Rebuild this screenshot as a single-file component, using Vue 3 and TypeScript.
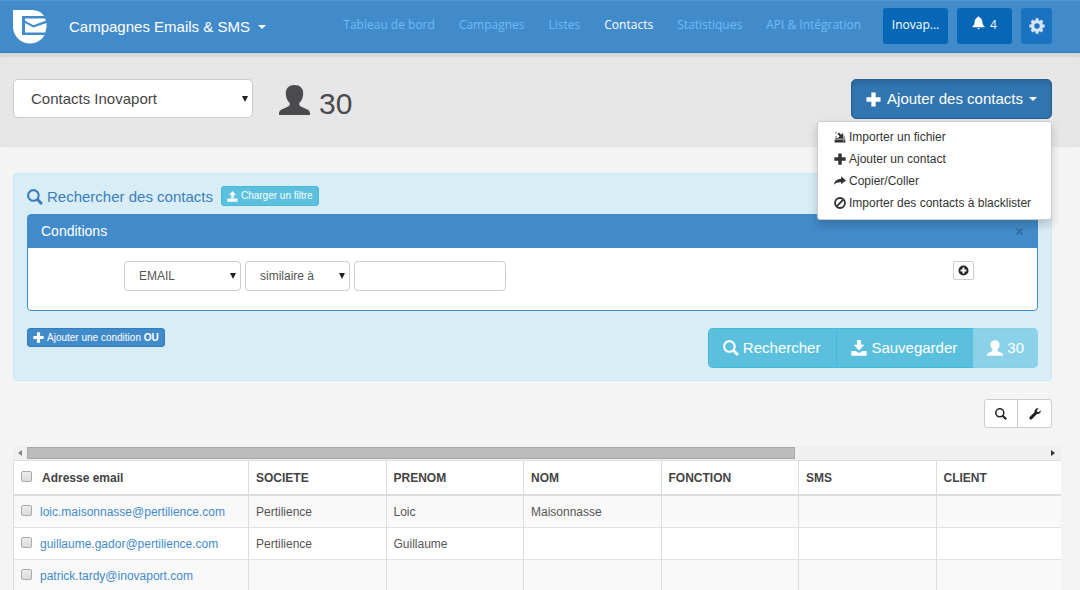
<script setup lang="ts">
import { ref } from 'vue'

interface NavLink {
  label: string
  active?: boolean
}

interface Contact {
  email: string
  societe?: string
  prenom?: string
  nom?: string
}

const links: NavLink[] = [
  { label: 'Tableau de bord' },
  { label: 'Campagnes' },
  { label: 'Listes' },
  { label: 'Contacts', active: true },
  { label: 'Statistiques' },
  { label: 'API & Intégration' },
]

const menu = [
  { icon: 'import', label: 'Importer un fichier' },
  { icon: 'plus', label: 'Ajouter un contact' },
  { icon: 'share', label: 'Copier/Coller' },
  { icon: 'ban', label: 'Importer des contacts à blacklister' },
]

const columns = ['SOCIETE', 'PRENOM', 'NOM', 'FONCTION', 'SMS', 'CLIENT']

const contacts: Contact[] = [
  { email: 'loic.maisonnasse@pertilience.com', societe: 'Pertilience', prenom: 'Loic', nom: 'Maisonnasse' },
  { email: 'guillaume.gador@pertilience.com', societe: 'Pertilience', prenom: 'Guillaume' },
  { email: 'patrick.tardy@inovaport.com' },
]

const total = ref(30)
const search = ref('')
</script>

<template>
  <svg class="sprite" aria-hidden="true">
    <symbol id="i-search" viewBox="0 0 16 16"><circle cx="6.4" cy="6.4" r="5.3" fill="none" stroke="currentColor" stroke-width="2.1" /><path d="M10.2 10.2 15 15" fill="none" stroke="currentColor" stroke-width="2.9" /></symbol>
    <symbol id="i-user" viewBox="0 0 32 32"><path d="M16 .5c5.600 0 9 3.300 9 8.500 0 4-1.500 8-4.100 10.200v1.300c0 1.500 1 2 2.800 2.800l5 2.200C31 26.500 32 28 32 30v1.500H0V30c0-2 1-3.500 3.300-4.500l5-2.200c1.800-.8 2.800-1.300 2.800-2.800v-1.300C8.500 17 7 13 7 9 7 3.800 10.400.5 16 .5z" fill="currentColor" /></symbol>
    <symbol id="i-plus" viewBox="0 0 16 16"><path d="M5.700.5h4.600v5.200h5.200v4.600h-5.200v5.200H5.700v-5.200H.5V5.700h5.200z" fill="currentColor" /></symbol>
    <symbol id="i-upload" viewBox="0 0 16 16"><path d="M8 0l5 5.800H9.900V10H6.100V5.800H3zM.5 11h15v4.500H.5zM12 12.600v1.200h1.800v-1.200z" fill="currentColor" fill-rule="evenodd" /></symbol>
    <symbol id="i-download" viewBox="0 0 16 16"><path d="M6 0h4v4.800h3.300L8 10.400 2.700 4.800H6zM.3 11h4.200L8 13l3.500-2h4.200v4.700H.3z" fill="currentColor" /></symbol>
    <symbol id="i-import" viewBox="0 0 16 16"><path d="M.8 11.200h14.400v4.100H.8zM12 12.800v1h1.600v-1z" fill="currentColor" fill-rule="evenodd" /><path d="M12.200 2.200v7H5.300l2.300-2.200-3-3 2-2 3 3z" fill="currentColor" /><path d="M3.200 6.500 2.200 10h11.600l-.6-4M1.500 3.200l2.300-1.800" fill="none" stroke="currentColor" stroke-width="1" /></symbol>
    <symbol id="i-share" viewBox="0 0 16 16"><path d="M9.500 1.800 16 7.200l-6.500 5.200V9.600C5.400 9.400 2.600 10.200 0 13c.4-5 4.200-7.800 9.500-8z" fill="currentColor" /></symbol>
    <symbol id="i-ban" viewBox="0 0 16 16"><circle cx="8" cy="8" r="6.600" fill="none" stroke="currentColor" stroke-width="2.500" /><path d="M12.400 3.600 3.600 12.400" stroke="currentColor" stroke-width="2.500" /></symbol>
    <symbol id="i-bell" viewBox="0 0 16 16"><path d="M8 0c.8 0 1.300.5 1.400 1.200C11.600 2 12.500 4 12.700 6.500c.2 2.800.8 4.300 2.800 5.800v.9H.5v-.9c2-1.500 2.600-3 2.800-5.800C3.500 4 4.400 2 6.600 1.200 6.700.5 7.200 0 8 0zM6.300 14.200h3.400L8 16z" fill="currentColor" /></symbol>
    <symbol id="i-gear" viewBox="0 0 16 16"><circle cx="8" cy="8" r="4.400" fill="none" stroke="currentColor" stroke-width="3.400" /><path d="M8 .3V4M8 12v3.700M.3 8H4M12 8h3.700M2.600 2.600l2.500 2.500M10.900 10.900l2.500 2.500M13.400 2.600l-2.500 2.500M5.100 10.900l-2.500 2.500" stroke="currentColor" stroke-width="3" /></symbol>
    <symbol id="i-add-circle" viewBox="0 0 12 12"><path d="M6 .5a5.500 5.500 0 1 1 0 11 5.500 5.500 0 0 1 0-11zM4.900 2.800v2.100H2.800v2.200h2.100v2.100h2.200V7.100h2.100V4.900H7.100V2.800z" fill="currentColor" fill-rule="evenodd" /></symbol>
    <symbol id="i-wrench" viewBox="0 0 16 16"><path d="M15.600 3 13 5.600l-2.200-.5-.4-2L13 .6C10.500-.3 7.800 1.300 7.500 3.900c0 .6 0 1 .1 1.500L.9 12c-1.700 1.900.9 4.600 2.900 2.900l6.700-7c2.700.8 5.900-1.500 5.100-4.900z" fill="currentColor" /></symbol>
    <symbol id="i-caret" viewBox="0 0 8 4"><path d="M0 0h8L4 4z" fill="currentColor" /></symbol>
    <symbol id="i-arrow" viewBox="0 0 6 6"><path d="M0 0h6L3 6z" fill="currentColor" /></symbol>
  </svg>

  <div class="page">
    <header class="bar">
      <a class="logo" href="#" aria-label="Accueil">
        <svg viewBox="0 0 34 34"><path d="M0 0h18C24 0 28.500 2 31 6H9v19h22.500C28.500 30.500 23 33.500 17 33.500A17 17 0 0 1 0 17z" fill="#fff" /><path d="M12 8.500h20l1 2-12.500 4.700L12 10.700zM12 13l8.500 4.600L33.500 13c.4 3.500-.2 6.500-1.300 9.500H12z" fill="#fff" /></svg>
      </a>
      <button class="brand" type="button">Campagnes Emails &amp; SMS <svg class="caret"><use href="#i-caret" /></svg></button>
      <nav class="nav">
        <a v-for="l in links" :key="l.label" href="#" :class="{ active: l.active }">{{ l.label }}</a>
      </nav>
      <div class="tools">
        <button class="tool account" type="button">Inovap...</button>
        <button class="tool bell" type="button"><svg><use href="#i-bell" /></svg>4</button>
        <button class="tool gear" type="button" aria-label="Paramètres"><svg><use href="#i-gear" /></svg></button>
      </div>
    </header>

    <section class="hero">
      <div class="select list">
        <select aria-label="Liste"><option>Contacts Inovaport</option></select>
        <svg><use href="#i-arrow" /></svg>
      </div>
      <div class="count"><svg><use href="#i-user" /></svg>{{ total }}</div>
      <div class="add">
        <button class="add-button" type="button"><svg class="plus"><use href="#i-plus" /></svg>Ajouter des contacts <svg class="caret"><use href="#i-caret" /></svg></button>
        <ul class="menu">
          <li v-for="m in menu" :key="m.icon"><a href="#"><svg><use :href="'#i-' + m.icon" /></svg>{{ m.label }}</a></li>
        </ul>
      </div>
    </section>

    <main>
      <section class="well">
        <div class="title">
          <h1><svg><use href="#i-search" /></svg>Rechercher des contacts</h1>
          <button class="mini" type="button"><svg><use href="#i-upload" /></svg>Charger un filtre</button>
        </div>
        <div class="panel">
          <div class="panel-head">Conditions<button type="button" aria-label="Fermer">×</button></div>
          <div class="panel-body">
            <div class="select field"><select aria-label="Champ"><option>EMAIL</option></select><svg><use href="#i-arrow" /></svg></div>
            <div class="select operator"><select aria-label="Opérateur"><option>similaire à</option></select><svg><use href="#i-arrow" /></svg></div>
            <input v-model="search" class="value" type="text" aria-label="Valeur" />
            <button class="more" type="button" aria-label="Ajouter"><svg><use href="#i-add-circle" /></svg></button>
          </div>
        </div>
        <div class="foot">
          <button class="mini primary" type="button"><svg><use href="#i-plus" /></svg><span>Ajouter une condition <b>OU</b></span></button>
          <div class="actions">
            <button type="button"><svg><use href="#i-search" /></svg>Rechercher</button>
            <button type="button"><svg><use href="#i-download" /></svg>Sauvegarder</button>
            <button type="button" disabled><svg><use href="#i-user" /></svg>{{ total }}</button>
          </div>
        </div>
      </section>

      <div class="table-tools">
        <button type="button" aria-label="Rechercher"><svg><use href="#i-search" /></svg></button>
        <button type="button" aria-label="Outils"><svg><use href="#i-wrench" /></svg></button>
      </div>

      <div class="grid">
        <div class="scroll" aria-hidden="true">
          <svg class="left" viewBox="0 0 4 6"><path d="M4 0v6L0 3z" fill="#858585" /></svg>
          <div class="track"><div class="thumb"></div></div>
          <svg class="right" viewBox="0 0 4 6"><path d="M0 0v6l4-3z" fill="#333" /></svg>
        </div>
        <div class="clip">
          <table>
            <thead>
              <tr>
                <th class="mail"><label><input type="checkbox" /><span>Adresse email</span></label></th>
                <th v-for="c in columns" :key="c">{{ c }}</th>
              </tr>
            </thead>
            <tbody>
              <tr v-for="c in contacts" :key="c.email">
                <td class="mail"><div><input type="checkbox" :aria-label="c.email" /><a href="#">{{ c.email }}</a></div></td>
                <td>{{ c.societe }}</td>
                <td>{{ c.prenom }}</td>
                <td>{{ c.nom }}</td>
                <td></td>
                <td></td>
                <td></td>
              </tr>
            </tbody>
          </table>
        </div>
      </div>
    </main>
  </div>
</template>

<style>
body {
  background: #f4f4f4;
}
</style>

<style scoped>
* {
  box-sizing: border-box;
}
.sprite {
  position: absolute;
  width: 0;
  height: 0;
}
.page {
  font: 12px/18px "Liberation Sans", Arial, sans-serif;
  color: #444;
}
svg {
  display: block;
  flex: none;
}
button,
input,
select {
  font: inherit;
  margin: 0;
}
button {
  display: flex;
  align-items: center;
  white-space: nowrap;
  cursor: pointer;
}
a {
  text-decoration: none;
}
.caret {
  width: 8px;
  height: 4px;
}

.bar {
  display: flex;
  align-items: center;
  height: 53px;
  padding: 0 28px 0 13px;
  background: #428bca;
  border-top: 1px solid #5596cf;
  border-bottom: 1px solid #2a7ac5;
}
.logo svg {
  width: 34px;
  height: 34px;
}
.brand {
  gap: 8px;
  margin-left: 22px;
  padding: 0;
  border: 0;
  background: none;
  color: #fff;
  font-size: 15px;
}
.nav {
  display: flex;
  gap: 24px;
  margin-left: auto;
  padding-bottom: 4px;
  font: 12px/18px "Open Sans", sans-serif;
  white-space: nowrap;
}
.nav a {
  color: #6cbcf8;
}
.nav a.active {
  color: #fff;
}
.tools {
  display: flex;
  gap: 9px;
  margin-left: 22px;
  padding-bottom: 2px;
  font: 12px/18px "Open Sans", sans-serif;
}
.tool {
  justify-content: center;
  gap: 5px;
  height: 36px;
  padding: 0 8px 2px;
  border: 0;
  border-radius: 3px;
  background: #0667b6;
  color: #fff;
}
.account {
  width: 65px;
}
.bell {
  width: 55px;
}
.bell svg {
  width: 13px;
  height: 14px;
  margin-bottom: 3px;
}
.gear {
  width: 31px;
  padding-bottom: 0;
  background: #1a72c0;
  color: #d5e5f3;
}
.gear svg {
  width: 16px;
  height: 16px;
}

.hero {
  display: flex;
  align-items: flex-start;
  height: 94px;
  padding: 26px 28px 0 13px;
  background: repeating-conic-gradient(#e4e4e4 0 25%, #e9e9e9 0 50%) 0 0 / 4px 4px;
  box-shadow: inset 0 4px 1px #d8d8d8;
}
.select {
  display: grid;
  align-items: center;
}
.select > * {
  grid-area: 1 / 1;
}
.select svg {
  width: 6px;
  height: 6px;
  margin-right: 5px;
  justify-self: end;
  color: #222;
  pointer-events: none;
}
.select select {
  appearance: none;
  width: 100%;
  height: 30px;
  padding: 0 14px;
  border: 1px solid #ccc;
  border-radius: 4px;
  background: #fff;
  color: #555;
}
.list {
  width: 240px;
}
.select.list select {
  height: 39px;
  padding: 0 17px;
  border-radius: 5px;
  color: #444;
  font-size: 15px;
}
.count {
  display: flex;
  align-items: center;
  gap: 9px;
  height: 39px;
  margin-left: 26px;
  padding-top: 10px;
  font-size: 30px;
  line-height: 39px;
  color: #4b4b4f;
}
.count svg {
  width: 31px;
  height: 32px;
  margin-bottom: 8px;
}
.add {
  position: relative;
  margin-left: auto;
}
.add-button {
  gap: 6px;
  height: 40px;
  padding: 0 14px;
  border: 1px solid #285e8e;
  border-radius: 5px;
  background: #3276b1;
  box-shadow: inset 0 3px 5px rgba(0, 0, 0, 0.125);
  color: #fff;
  font-size: 15px;
}
.plus {
  width: 15px;
  height: 15px;
}
.menu {
  position: absolute;
  z-index: 2;
  top: 42px;
  right: 0;
  min-width: 235px;
  margin: 0;
  padding: 4px 0 5px;
  border: 1px solid #ccc;
  border-radius: 3px;
  background: #fff;
  box-shadow: 0 5px 10px rgba(0, 0, 0, 0.18);
  list-style: none;
}
.menu a {
  display: flex;
  align-items: center;
  gap: 3px;
  padding: 2px 16px;
  color: #333;
  white-space: nowrap;
}
.menu svg {
  width: 12px;
  height: 12px;
}

main {
  padding: 26px 28px 0 13px;
}
.well {
  padding: 12px 13px;
  border: 1px solid #c6e9f2;
  border-radius: 4px;
  background: #d9edf7;
}
.title {
  display: flex;
  align-items: flex-start;
  gap: 8px;
  height: 28px;
}
h1 {
  display: flex;
  align-items: center;
  gap: 4px;
  height: 22px;
  margin: 0;
  color: #3a7fbb;
  font-size: 15px;
  font-weight: normal;
}
h1 svg {
  width: 16px;
  height: 16px;
}
.mini {
  gap: 3px;
  height: 20px;
  padding: 0 5px;
  border: 1px solid #46b8da;
  border-radius: 3px;
  background: #5bc0de;
  color: #fff;
  font-size: 10px;
}
.mini.primary {
  height: 19px;
  border-color: #357ebd;
  background: #428bca;
}
.mini svg {
  width: 11px;
  height: 11px;
}
.panel {
  border: 1px solid #428bca;
  border-radius: 4px;
  background: #fff;
}
.panel-head {
  display: flex;
  justify-content: space-between;
  height: 33px;
  padding: 0 13px;
  background: #428bca;
  color: #fff;
  font-size: 14px;
  line-height: 32px;
}
.panel-head button {
  height: 32px;
  padding: 2px 0 0;
  border: 0;
  background: none;
  color: #2f6797;
  font-size: 16px;
}
.panel-body {
  display: flex;
  align-items: flex-start;
  gap: 4px;
  padding: 13px 63px 19px 96px;
}
.field {
  width: 117px;
}
.operator {
  width: 105px;
}
.value {
  width: 152px;
  height: 30px;
  padding: 0 8px;
  border: 1px solid #ccc;
  border-radius: 4px;
  background: #fff;
}
.more {
  width: 21px;
  height: 19px;
  margin-left: auto;
  padding: 0 4px;
  border: 1px solid #ccc;
  border-radius: 2px;
  background: #fff;
  color: #222;
}
.more svg {
  width: 11px;
  height: 11px;
}
.foot {
  display: flex;
  justify-content: space-between;
  align-items: flex-start;
  padding-top: 17px;
}
.actions {
  display: flex;
}
.actions button {
  gap: 4px;
  height: 40px;
  padding: 0 16px 0 14px;
  border: 1px solid #46b8da;
  border-right-width: 0;
  background: #5bc0de;
  color: #fff;
  font-size: 15px;
}
.actions button:first-child {
  border-radius: 5px 0 0 5px;
}
.actions button:last-child {
  padding: 0 14px 0 13px;
  border-color: #84cfe6;
  border-radius: 0 5px 5px 0;
  background: #8bd2e9;
}
.actions svg {
  width: 16px;
  height: 16px;
}

.table-tools {
  display: flex;
  justify-content: flex-end;
  margin-top: 18px;
}
.table-tools button {
  justify-content: center;
  width: 34px;
  height: 29px;
  padding: 0;
  border: 1px solid #ccc;
  border-radius: 3px 0 0 3px;
  background: #fff;
  color: #222;
}
.table-tools button + button {
  border-left: 0;
  border-radius: 0 3px 3px 0;
}
.table-tools svg {
  width: 12px;
  height: 12px;
}

.grid {
  margin: 18px -9px 0 0;
}
.scroll {
  display: flex;
  align-items: center;
  gap: 5px;
  height: 14px;
  padding: 0 6px 0 5px;
  background: #f0f0f0;
}
.scroll svg {
  width: 4px;
  height: 6px;
}
.track {
  flex: 1;
}
.thumb {
  width: calc(75% + 4px);
  height: 12px;
  border: 1px solid #a8a8a8;
  background: #bcbcbc;
}
.clip {
  overflow: hidden;
}
table {
  width: calc(100% + 13px);
  table-layout: fixed;
  border-collapse: separate;
  border-spacing: 0;
  border-top: 1px solid #ddd;
  border-left: 1px solid #ddd;
}
th,
td {
  height: 32px;
  padding: 0 7px;
  border-right: 1px solid #ddd;
  border-bottom: 1px solid #e2e2e2;
  text-align: left;
}
th {
  height: 35px;
  border-bottom: 2px solid #ddd;
  background: #fff;
}
td {
  background: #fff;
  color: #555;
}
tbody tr:nth-child(odd) td {
  background: #f9f9f9;
}
.mail {
  width: 235px;
}
.mail label,
.mail div {
  display: flex;
  align-items: center;
  gap: 8px;
}
.mail label {
  gap: 10px;
}
.mail a {
  color: #428bca;
}
.mail input {
  appearance: none;
  width: 11px;
  height: 11px;
  margin-bottom: 3px;
  border: 1px solid #aaa;
  border-radius: 2px;
  background: linear-gradient(#ececec, #dcdcdc);
}
</style>
